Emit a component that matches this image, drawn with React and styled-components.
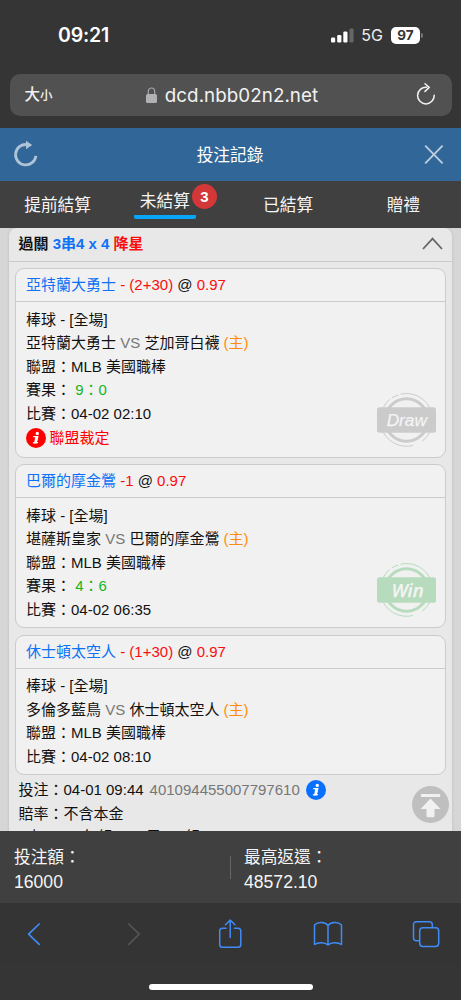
import React from "react";
import styled, { createGlobalStyle } from "styled-components";

const Global = createGlobalStyle`
  * { box-sizing: border-box; }
  body {
    margin: 0;
    background: #353535;
    font-family: "Liberation Sans", "Noto Sans CJK TC", sans-serif;
    font-size: 15px;
    color: #111;
  }
  svg { display: block; flex: none; }
`;

const Screen = styled.div`
  width: 461px;
  height: 1000px;
  overflow: hidden;
  display: flex;
  flex-direction: column;
  background: #353535;
`;

const StatusBar = styled.div`
  height: 74px;
  display: flex;
  justify-content: space-between;
  align-items: flex-start;
  padding: 23px 38px 0 58px;
  color: #fff;
  font-family: Inter, sans-serif;
`;

const Clock = styled.span`
  font-size: 19.5px;
  line-height: 24px;
  font-weight: 600;
  letter-spacing: -0.15px;
`;

const StatusIcons = styled.div`
  display: flex;
  align-items: center;
  height: 24px;
`;

const Network = styled.span`
  margin: 0 8px 0 7px;
  font-size: 16px;
  color: #eee;
`;

const Battery = styled.span`
  width: 29px;
  height: 17px;
  border-radius: 5px;
  background: #fff;
  color: #353535;
  font-size: 13.5px;
  line-height: 17px;
  font-weight: 700;
  text-align: center;
`;

const BatteryTip = styled.span`
  width: 2px;
  height: 5px;
  margin-left: 1px;
  border-radius: 0 2px 2px 0;
  background: #777;
`;

const AddressBar = styled.div`
  flex: none;
  height: 42px;
  margin: 0 9.5px 12px;
  padding: 0 16px 0 15px;
  border-radius: 10px;
  background: #515151;
  color: #f2f2f2;
  display: flex;
  align-items: center;
  justify-content: space-between;
`;

const TextSize = styled.span`
  width: 40px;
  font-size: 15.5px;
  font-weight: 500;
  line-height: 20px;
  small { font-size: 12.5px; }
`;

const Address = styled.span`
  display: flex;
  align-items: center;
  gap: 8px;
  padding-left: 4px;
  padding-top: 1px;
  font-family: Inter, sans-serif;
  font-size: 18.8px;
  letter-spacing: 0.05px;
`;

const TitleBar = styled.header`
  flex: none;
  height: 53px;
  padding: 0 17px 2px 13px;
  background: #316698;
  color: #fff;
  display: flex;
  align-items: center;
  justify-content: space-between;
  font-size: 16.7px;
`;

const Title = styled.span`
  margin-right: 2px;
`;

const Tabs = styled.nav`
  flex: none;
  height: 47px;
  background: #404040;
  display: grid;
  grid-template-columns: repeat(4, 1fr);
`;

const Tab = styled.div`
  display: flex;
  justify-content: center;
  padding-top: ${(p) => (p.$active ? "8px" : "13px")};
  padding-right: ${(p) => (p.$active ? "16px" : "0")};
  color: #f5f5f5;
  font-size: 16.7px;
  line-height: ${(p) => (p.$active ? "25px" : "24px")};
`;

const TabLabel = styled.span`
  position: relative;
  height: 30px;
  padding: 0 6px;
  border-bottom: ${(p) => (p.$active ? "4px solid #08a5f8" : "0")};
  border-radius: 2px;
`;

const Count = styled.span`
  position: absolute;
  left: 58px;
  top: -5px;
  width: 25px;
  height: 25px;
  border-radius: 50%;
  background: #d33738;
  color: #fff;
  font-size: 15px;
  font-weight: 700;
  line-height: 25px;
  text-align: center;
`;

const Content = styled.main`
  position: relative;
  flex: none;
  height: 603px;
  overflow: hidden;
  padding: 0 9px;
  background: #d6d6d6;
`;

const Slip = styled.section`
  height: 640px;
  border-radius: 8px 8px 0 0;
  background: #e8e8e8;
  box-shadow: 0 0 3px rgba(0, 0, 0, 0.12);
`;

const SlipHeader = styled.div`
  height: 34px;
  padding: 0 9.5px 2px;
  border-bottom: 1px solid #cacaca;
  display: flex;
  align-items: center;
  justify-content: space-between;
  font-size: 15px;
  font-weight: 700;
  line-height: 30px;
`;

const Cards = styled.div`
  display: flex;
  flex-direction: column;
  gap: 6.5px;
  padding: 6px 6px 0;
`;

const Card = styled.article`
  position: relative;
  height: ${(p) => p.$height}px;
  border: 1px solid #cbcbcb;
  border-radius: 9px;
  background: #f1f1f1;
`;

const CardTitle = styled.div`
  height: 33px;
  padding: 0 10px;
  border-bottom: 1px solid #cbcbcb;
  line-height: 32.6px;
  white-space: pre;
`;

const CardBody = styled.div`
  padding: 5.6px 10px 0;
`;

const Line = styled.div`
  height: 23.5px;
  line-height: 23.5px;
  white-space: pre;
`;

const Notice = styled(Line)`
  display: flex;
  align-items: center;
  gap: 3.5px;
  height: 25px;
  color: #f00;
`;

const Tint = styled.span`
  color: ${(p) => p.$color};
`;

const Stamp = styled.svg`
  position: absolute;
  right: 9px;
  bottom: 10px;
`;

const Details = styled.div`
  padding: 3.2px 9.5px 0;
`;

const DetailLine = styled(Line)`
  display: flex;
  align-items: center;
  gap: 6px;
`;

const TopButton = styled.svg`
  position: absolute;
  right: 12px;
  bottom: 8px;
`;

const Totals = styled.footer`
  flex: none;
  height: 72px;
  background: #404040;
  color: #f5f5f5;
  display: flex;
  align-items: center;
  font-size: 16.7px;
  line-height: 24px;
`;

const Total = styled.div`
  width: 230px;
  height: 48px;
  padding: 2.5px 0 0 14px;
`;

const Amount = styled.div`
  font-size: 17.6px;
`;

const Divider = styled.div`
  width: 1px;
  height: 23px;
  margin-right: -1px;
  background: #666;
`;

const Toolbar = styled.div`
  height: 62px;
  padding: 0 20px 0 19px;
  display: grid;
  grid-template-columns: repeat(5, 30px);
  justify-content: space-between;
  justify-items: center;
  align-items: center;
  background: #343434;
`;

const HomeIndicator = styled.div`
  flex: none;
  width: 164px;
  height: 6px;
  margin: 19px auto 0;
  border-radius: 3px;
  background: #fff;
`;

const BLUE = "#0d72f5";
const RED = "#fa0d0d";
const GREEN = "#17b51b";
const ORANGE = "#ff8c0a";

const bets = [
  {
    pick: "亞特蘭大勇士", line: "- (2+30)", away: "亞特蘭大勇士", home: "芝加哥白襪",
    score: "9：0", time: "04-02 02:10", notice: "聯盟裁定", stamp: "Draw", height: 189.9,
  },
  {
    pick: "巴爾的摩金鶯", line: "-1", away: "堪薩斯皇家", home: "巴爾的摩金鶯",
    score: "4：6", time: "04-02 06:35", stamp: "Win", height: 164,
  },
  {
    pick: "休士頓太空人", line: "- (1+30)", away: "多倫多藍鳥", home: "休士頓太空人",
    time: "04-02 08:10", height: 140,
  },
];

function InfoIcon({ color }) {
  return (
    <svg width="20" height="20" viewBox="0 0 20 20">
      <circle cx="10" cy="10" r="10" fill={color} />
      <circle cx="11.3" cy="5.4" r="1.7" fill="#fff" />
      <path d="M7.2 8.6h4.6l-1.5 6.1h1.6M6.9 14.9h3.4" fill="none" stroke="#fff" strokeWidth="1.2" />
      <path d="M10.8 8.4 9.3 15.2" stroke="#fff" strokeWidth="2.6" />
    </svg>
  );
}

const StampText = styled.text`
  fill: #f4f4f4;
  font-family: ${(p) => (p.$win ? '"Noto Sans"' : '"Liberation Sans"')}, sans-serif;
  font-size: ${(p) => (p.$win ? 18.7 : 17.3)}px;
  font-style: italic;
  font-weight: ${(p) => (p.$win ? 500 : 400)};
  stroke: #f4f4f4;
  stroke-width: 0.25px;
  text-anchor: middle;
`;

function ResultStamp({ label }) {
  const win = label === "Win";
  const color = win ? "#b7dbbd" : "#cbcbcb";
  return (
    <Stamp width="59" height="54" viewBox="0 0 59 54">
      <g fill="none" stroke={color}>
        <circle cx="29.5" cy="27" r="21.3" strokeWidth="3" />
        <path d="M23.5 1.2A26.3 26.3 0 0 1 54.5 19M15 4.8A26.3 26.3 0 0 1 21.5 2M6.3 14.5A26.3 26.3 0 0 1 12.8 6.3M4.5 35A26.3 26.3 0 0 0 36 52.5M45 48.2A26.3 26.3 0 0 0 54.5 35" strokeWidth="1" />
      </g>
      <rect y="14.3" width="59" height="25.5" rx="2.5" fill={color} />
      <StampText $win={win} x={win ? 30.5 : 29.8} y={win ? 34 : 33}>{label}</StampText>
    </Stamp>
  );
}

function BetCard({ bet }) {
  return (
    <Card $height={bet.height}>
      <CardTitle>
        <Tint $color={BLUE}>{bet.pick}</Tint> <Tint $color={RED}>{bet.line}</Tint> @ <Tint $color={RED}>0.97</Tint>
      </CardTitle>
      <CardBody>
        <Line>棒球 - [全場]</Line>
        <Line>
          {bet.away} <Tint $color="#777">VS</Tint> {bet.home} <Tint $color={ORANGE}>(主)</Tint>
        </Line>
        <Line>聯盟：MLB 美國職棒</Line>
        {bet.score && (
          <Line>
            賽果： <Tint $color={GREEN}>{bet.score}</Tint>
          </Line>
        )}
        <Line>比賽：{bet.time}</Line>
        {bet.notice && (
          <Notice>
            <InfoIcon color="#f00" />
            {bet.notice}
          </Notice>
        )}
      </CardBody>
      {bet.stamp && <ResultStamp label={bet.stamp} />}
    </Card>
  );
}

export default function App() {
  return (
    <Screen>
      <Global />
      <StatusBar>
        <Clock>09:21</Clock>
        <StatusIcons>
          <svg width="23" height="15" viewBox="0 0 23 15" fill="#fff">
            <rect x="0" y="9.5" width="4.2" height="5" rx="1.2" />
            <rect x="6.2" y="7" width="4.2" height="7.5" rx="1.2" />
            <rect x="12.3" y="3.5" width="4.2" height="11" rx="1.2" />
            <rect x="18.4" y="0.5" width="4.2" height="14" rx="1.2" fill="#666" />
          </svg>
          <Network>5G</Network>
          <Battery>97</Battery>
          <BatteryTip />
        </StatusIcons>
      </StatusBar>

      <AddressBar>
        <TextSize>大<small>小</small></TextSize>
        <Address>
          <svg width="11" height="17" viewBox="0 0 11 17">
            <path d="M2.3 8V4.2a3.2 3.2 0 0 1 6.4 0V8" fill="none" stroke="#a5a5aa" strokeWidth="1.2" />
            <rect y="7" width="11" height="9" rx="1.6" fill="#b0b0b5" />
          </svg>
          dcd.nbb02n2.net
        </Address>
        <svg width="40" height="24" viewBox="0 0 40 24" fill="none" stroke="#f2f2f2" strokeWidth="1.5" strokeLinecap="round" strokeLinejoin="round">
          <path d="M31.5 4.3A8.3 8.3 0 1 0 39.2 12.3M30 0.8l4.2 3.6-4.2 4" />
        </svg>
      </AddressBar>

      <TitleBar>
        <svg width="25" height="28" viewBox="0 0 25 28">
          <path d="M14 4.6A10.2 10.2 0 1 0 22.9 15.8" fill="none" stroke="#afc3d7" strokeWidth="2.8" />
          <path d="M13 0.8 19.2 5 13 9.2z" fill="#afc3d7" />
        </svg>
        <Title>投注記錄</Title>
        <svg width="20" height="20" viewBox="0 0 20 20" stroke="#bccddd" strokeWidth="1.9">
          <path d="M1.2 1.7 18.6 19.3M18.6 1.7 1.2 19.3" />
        </svg>
      </TitleBar>

      <Tabs>
        <Tab><TabLabel>提前結算</TabLabel></Tab>
        <Tab $active>
          <TabLabel $active>
            未結算
            <Count>3</Count>
          </TabLabel>
        </Tab>
        <Tab><TabLabel>已結算</TabLabel></Tab>
        <Tab><TabLabel>贈禮</TabLabel></Tab>
      </Tabs>

      <Content>
        <Slip>
          <SlipHeader>
            <span>
              過關 <Tint $color={BLUE}>3串4 x 4</Tint> <Tint $color={RED}>降星</Tint>
            </span>
            <svg width="21" height="13" viewBox="0 0 21 13" fill="none" stroke="#666" strokeWidth="1.8">
              <path d="M1 12 10.5 1.7 20 12" />
            </svg>
          </SlipHeader>
          <Cards>
            {bets.map((bet) => (
              <BetCard key={bet.pick} bet={bet} />
            ))}
          </Cards>
          <Details>
            <DetailLine>
              <span>投注：04-01 09:44</span>
              <Tint $color="#777">401094455007797610</Tint>
              <InfoIcon color="#0870ff" />
            </DetailLine>
            <Line>賠率：不含本金</Line>
            <Line>3串4：4 (每組4000元 x 4組) = 16000</Line>
          </Details>
        </Slip>
        <TopButton width="37" height="37" viewBox="0 0 37 37">
          <circle cx="18.5" cy="18.5" r="18.5" fill="#bfbfbf" />
          <rect x="8.8" y="8" width="19.5" height="3" rx="1.2" fill="#f1f1f1" />
          <path d="M18.5 12.5 28.5 23h-6v7q0 1.2-1.2 1.2h-5.6q-1.2 0-1.2-1.2v-7h-6z" fill="#f1f1f1" />
        </TopButton>
      </Content>

      <Totals>
        <Total>投注額：<Amount>16000</Amount></Total>
        <Divider />
        <Total>最高返還：<Amount>48572.10</Amount></Total>
      </Totals>

      <Toolbar>
        <svg width="16" height="24" viewBox="0 0 16 24" fill="none" stroke="#3f8cf7" strokeWidth="1.7" strokeLinecap="round" strokeLinejoin="round">
          <path d="M13.2 2 2.6 12.2 13.2 22.3" />
        </svg>
        <svg width="16" height="24" viewBox="0 0 16 24" fill="none" stroke="#545454" strokeWidth="1.7" strokeLinecap="round" strokeLinejoin="round">
          <path d="M4.8 2 15.2 12.2 4.8 22.3" />
        </svg>
        <svg width="24" height="30" viewBox="0 0 24 30" fill="none" stroke="#3f8cf7" strokeWidth="1.5" strokeLinecap="round" strokeLinejoin="round">
          <path d="M8 9.2H4.5Q1.7 9.2 1.7 12V25.5Q1.7 28.3 4.5 28.3H20Q22.8 28.3 22.8 25.5V12Q22.8 9.2 20 9.2H16.5M12.2 18.5V1.1M7.5 5.7 12.2 1 16.9 5.7" />
        </svg>
        <svg width="30" height="26" viewBox="0 0 30 26" fill="none" stroke="#3f8cf7" strokeWidth="1.5" strokeLinejoin="round">
          <path d="M15 24V4.5C12.5.8 5 .2 1.5 4V23.5C5 21 12 21 15 24 18 21 25 21 28.5 23.5V4C25 .2 17.5.8 15 4.5" />
        </svg>
        <svg width="28" height="28" viewBox="0 0 28 28" fill="none" stroke="#3f8cf7" strokeWidth="1.5">
          <rect x="7.7" y="7.7" width="19" height="18.8" rx="3.2" />
          <path d="M7.7 20.8H4.5Q1.5 20.8 1.5 17.8V4.8Q1.5 1.8 4.5 1.8H17.3Q20.3 1.8 20.3 4.8V7.7" />
        </svg>
      </Toolbar>
      <HomeIndicator />
    </Screen>
  );
}
